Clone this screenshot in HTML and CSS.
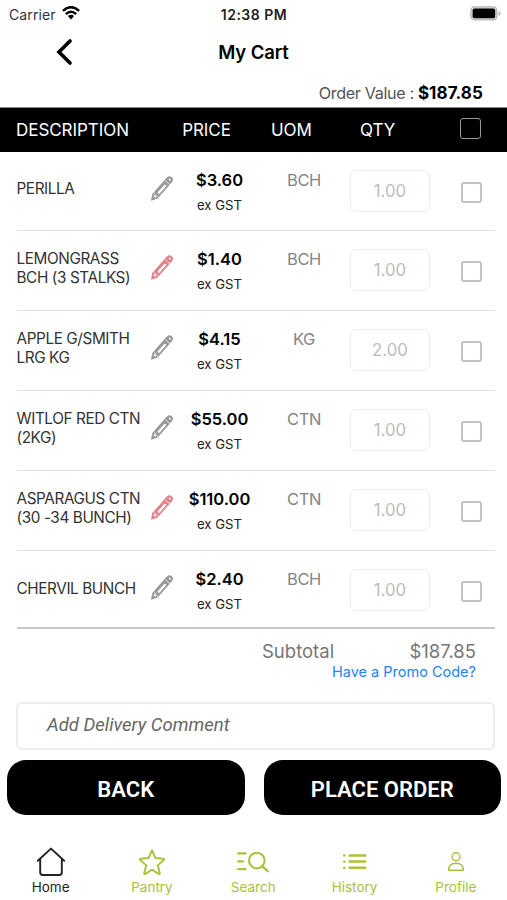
FILE: index.html
```html
<!DOCTYPE html>
<html lang="en">
<head>
<meta charset="utf-8">
<title>My Cart</title>
<link rel="stylesheet" href="styles.css">
</head>
<body>
<svg class="defs" width="0" height="0" aria-hidden="true">
  <symbol id="pencil" viewBox="0 0 26 28">
    <path d="M1.6 26.2 3.2 18.8 8.6 23.6Z" fill="currentColor" stroke="currentColor" stroke-linejoin="round"/>
    <path d="M6.4 20.6 17.6 7.9" fill="none" stroke="currentColor" stroke-width="7.2"/>
    <path d="M18 7.4 20.2 5" fill="none" stroke="currentColor" stroke-width="7.2" stroke-linecap="round"/>
    <g fill="none" stroke="#fff" stroke-linecap="round">
      <path stroke-width="2.3" d="M9.2 18.4 15.6 11.2"/>
      <path stroke-width="1.8" d="M4.8 21.6 5.6 22.4"/>
      <path stroke-width=".7" d="M16 6 20.6 10"/>
      <path stroke-width="1.4" d="M20.2 4.4 21.2 5.3"/>
    </g>
  </symbol>
</svg>
<div class="status">
  <div class="carrier"><span>Carrier</span>
    <svg width="18" height="14" viewBox="0 0 18 14"><g fill="none" stroke="#000" stroke-width="2.4"><path d="M.9 4.9Q9-2.6 17.1 4.9"/><path d="M3.8 8.1Q9 3.4 14.2 8.1"/></g><path d="M5.9 10.1Q9 7.6 12.1 10.1L9 13.4Z"/></svg>
  </div>
  <div class="clock">12:38 PM</div>
  <svg class="battery" width="31" height="15" viewBox="0 0 31 15"><rect x=".9" y=".9" width="26" height="13" rx="3.6" fill="#ddd" stroke="#b5b5b5" stroke-width="1.3"/><rect x="2.6" y="2.6" width="22.6" height="9.6" rx="1.8"/><path d="M28.6 5v5q2-.8 2-2.5t-2-2.5Z" fill="#b5b5b5"/></svg>
</div>
<header class="nav">
  <svg width="18" height="28" viewBox="0 0 18 28"><path d="M15 3 4 14 15 25" fill="none" stroke="#000" stroke-width="3.7" stroke-linecap="round"/></svg>
  <h1>My Cart</h1>
</header>
<div class="order"><span class="order-label">Order Value :</span><b>$187.85</b></div>
<main>
  <div class="cols head"><span class="h-desc">DESCRIPTION</span><span class="h-price">PRICE</span><span class="h-uom">UOM</span><span class="h-qty">QTY</span><i class="check"></i></div>
  <div class="cols row first"><span class="name">PERILLA</span><svg class="pencil"><use href="#pencil"/></svg><div class="price"><b>$3.60</b><small>ex GST</small></div><span class="uom">BCH</span><span class="qty">1.00</span><i class="check"></i></div>
  <div class="cols row"><span class="name">LEMONGRASS<br>BCH (3 STALKS)</span><svg class="pencil red"><use href="#pencil"/></svg><div class="price"><b>$1.40</b><small>ex GST</small></div><span class="uom">BCH</span><span class="qty">1.00</span><i class="check"></i></div>
  <div class="cols row"><span class="name">APPLE G/SMITH<br>LRG KG</span><svg class="pencil"><use href="#pencil"/></svg><div class="price"><b>$4.15</b><small>ex GST</small></div><span class="uom">KG</span><span class="qty">2.00</span><i class="check"></i></div>
  <div class="cols row"><span class="name">WITLOF RED CTN<br>(2KG)</span><svg class="pencil"><use href="#pencil"/></svg><div class="price"><b>$55.00</b><small>ex GST</small></div><span class="uom">CTN</span><span class="qty">1.00</span><i class="check"></i></div>
  <div class="cols row"><span class="name">ASPARAGUS CTN<br>(30 -34 BUNCH)</span><svg class="pencil red"><use href="#pencil"/></svg><div class="price"><b>$110.00</b><small>ex GST</small></div><span class="uom">CTN</span><span class="qty">1.00</span><i class="check"></i></div>
  <div class="cols row last"><span class="name">CHERVIL BUNCH</span><svg class="pencil"><use href="#pencil"/></svg><div class="price"><b>$2.40</b><small>ex GST</small></div><span class="uom">BCH</span><span class="qty">1.00</span><i class="check"></i></div>
</main>
<div class="subtotal"><span>Subtotal</span><span>$187.85</span></div>
<a class="promo">Have a Promo Code?</a>
<div class="comment">Add Delivery Comment</div>
<div class="actions"><button>BACK</button><button>PLACE ORDER</button></div>
<nav class="tabs">
  <a class="active"><svg width="34" height="32" viewBox="0 0 34 32"><path d="M3.8 14.8 17 2.6 30.2 14.8M6.2 13V26.6Q6.2 29 8.6 29H25.4Q27.8 29 27.8 26.6V13" stroke-width="1.9"/></svg><span>Home</span></a>
  <a><svg width="34" height="32" viewBox="0 0 34 32"><path stroke-width="1.9" d="M17 4.2 20.4 12 28.6 12.8Q29.6 13.2 28.8 14L22.8 19.4 24.8 27.2Q24.8 28.4 23.8 28L17 23.6 10.2 28Q9.2 28.4 9.2 27.2L11.2 19.4 5.2 14Q4.4 13.2 5.4 12.8L13.6 12Z"/></svg><span>Pantry</span></a>
  <a><svg width="34" height="32" viewBox="0 0 34 32"><path stroke-width="2.3" d="M2.2 7.4H9.6M2.2 15.4H7M2.2 23.2H9.6M26.5 20.4 31.6 25.2"/><circle cx="20.8" cy="14.6" r="7.8" stroke-width="2.1"/></svg><span>Search</span></a>
  <a><svg width="34" height="32" viewBox="0 0 34 32"><path stroke-width="2.5" d="M11.6 9.4H27.2M11.6 15.6H27.2M11.6 21.8H27.2"/><path stroke-width="2.4" d="M6.2 9.4h.2M6.2 15.6h.2M6.2 21.8h.2"/></svg><span>History</span></a>
  <a><svg width="34" height="32" viewBox="0 0 34 32"><circle cx="17" cy="10.8" r="4" stroke-width="1.4"/><path stroke-width="1.4" d="M9.6 24.2Q9.6 17.2 17 17.2T24.4 24.2Z"/></svg><span>Profile</span></a>
</nav>
</body>
</html>
```
FILE: styles.css
```css
* { box-sizing: border-box; }
body { margin: 0; width: 507px; height: 900px; overflow: hidden; background: #fff; color: #000; font-family: Inter, "Liberation Sans", sans-serif; display: flex; flex-direction: column; }
.defs { display: none; }
.status { height: 28px; flex: none; display: grid; grid-template-columns: 1fr auto 1fr; align-items: center; padding: 0 6px 0 9px; font-size: 14px; }
.carrier { display: flex; align-items: center; gap: 6px; color: #333; letter-spacing: .1px; }
.carrier svg { margin-top: -3px; }
.clock { font-weight: 600; font-size: 14px; letter-spacing: .5px; color: #222; margin-right: 2px; }
.battery { justify-self: end; margin-top: -2px; }
.nav { height: 48px; flex: none; display: grid; grid-template-columns: 1fr auto 1fr; align-items: center; }
.nav svg { margin-left: 55px; }
h1 { margin: 0; font-size: 18.5px; font-weight: 600; letter-spacing: -.1px; }
.order { height: 31px; flex: none; display: flex; justify-content: flex-end; align-items: center; gap: 4px; padding: 2px 24px 0 0; font-size: 16.2px; }
.order-label { color: #555; letter-spacing: -.35px; }
.order b { font-weight: 700; font-size: 17px; letter-spacing: .1px; }
.cols { display: grid; grid-template-columns: 125px 40px 75px 93px 80px 17px 48px; }
.head { height: 45px; padding-left: 16px; padding-bottom: 1px; align-items: center; background: #000; color: #fff; font-size: 17px; border-top: 1px solid #888; letter-spacing: -.05px; }
.h-price { grid-column: 2 / 4; justify-self: center; padding-left: 16px; }
.h-uom { grid-column: 4; padding-left: 15px; }
.h-qty { grid-column: 5; padding-left: 11px; }
.check { grid-column: 7; justify-self: center; width: 21px; height: 21px; border: 2px solid #c2c2c2; border-radius: 3px; }
.head .check { border: 1.5px solid #999; margin-bottom: 2px; }
.row { height: 80px; margin: 0 12px 0 17px; border-bottom: 1px solid #e2e2e2; align-items: start; }
.first { height: 79px; }
.last { height: 78px; border-bottom: 2px solid #c6c6c6; }
.name { align-self: center; margin: -3px 0 0 -.5px; font-size: 15.3px; line-height: 18.7px; letter-spacing: -.4px; color: #333; white-space: nowrap; }
.last .name { margin-top: 0; }
.pencil { width: 25px; height: 27px; margin: 23px 0 0 8px; color: #999; }
.red { color: #e08387; }
.price { display: flex; flex-direction: column; align-items: center; padding-top: 18px; }
.price b { font-size: 16.5px; line-height: 21px; font-weight: 600; }
.price small { font-size: 13.2px; line-height: 18px; margin-top: 5px; color: #222; }
.uom { justify-self: center; padding: 18px 0 0 1px; font-size: 16.5px; line-height: 21px; color: #858585; letter-spacing: -.4px; }
.qty { height: 42px; margin-top: 18px; border: 1.5px solid #ececec; border-radius: 6px; display: flex; align-items: center; justify-content: center; font-size: 16.8px; color: #bcbcbc; }
.row .check { margin-top: 30px; }
.subtotal { flex: none; height: 34px; padding: 9px 31px 0 262px; display: flex; justify-content: space-between; font-size: 18.5px; line-height: 26px; color: #777; }
.promo { align-self: flex-end; margin: -1px 31px 0 0; height: 20px; font-size: 14.5px; line-height: 20px; color: #2384f7; }
.comment { flex: none; height: 48px; margin: 20px 12px 0 16px; border: 2px solid #ececec; border-radius: 6px; padding: 0 0 2px 29px; display: flex; align-items: center; font: italic 18.5px Roboto, sans-serif; color: #666; }
.actions { flex: none; height: 55px; margin: 10px 6px 0 7px; display: grid; grid-template-columns: 1fr 1fr; gap: 19px; }
.actions button { border: 0; border-radius: 19px; background: #000; color: #fff; font: 600 22px Roboto, sans-serif; padding: 3px 0 0; }
.tabs { flex: none; height: 85px; display: grid; grid-template-columns: repeat(5, 101.3px); padding-top: 31px; }
.tabs a { display: flex; flex-direction: column; align-items: center; color: #abc13b; font-size: 13.5px; line-height: 18px; }
.tabs svg { flex: none; fill: none; stroke: currentColor; stroke-linecap: round; stroke-linejoin: round; }
.tabs .active { color: #222; }
```
